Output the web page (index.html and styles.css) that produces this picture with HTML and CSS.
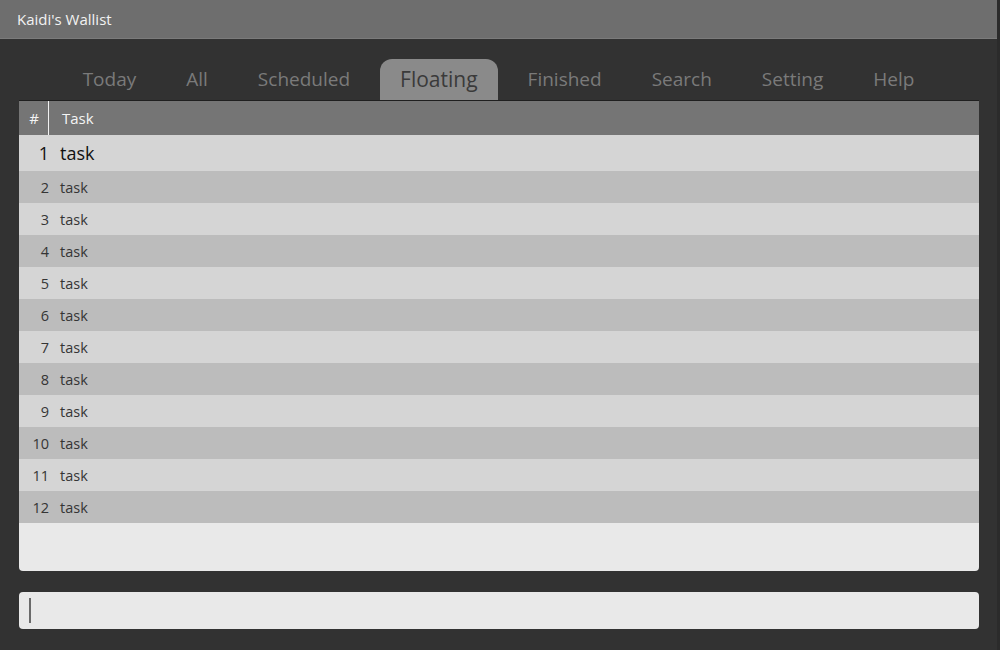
FILE: index.html
```html
<!DOCTYPE html>
<html>
<head>
<meta charset="utf-8">
<link rel="stylesheet" href="styles.css">
</head>
<body>
<div class="screen">
  <div class="window">
    <div class="titlebar">Kaidi's Wallist</div>
    <div class="tabs">
      <div class="tab">Today</div>
      <div class="tab">All</div>
      <div class="tab">Scheduled</div>
      <div class="tab active">Floating</div>
      <div class="tab">Finished</div>
      <div class="tab">Search</div>
      <div class="tab">Setting</div>
      <div class="tab">Help</div>
    </div>
    <div class="panel">
      <div class="thead">
        <div class="hnum">#</div>
        <div class="htask">Task</div>
      </div>
      <div class="row first"><div class="num">1</div><div class="task">task</div></div>
      <div class="row even"><div class="num">2</div><div class="task">task</div></div>
      <div class="row"><div class="num">3</div><div class="task">task</div></div>
      <div class="row even"><div class="num">4</div><div class="task">task</div></div>
      <div class="row"><div class="num">5</div><div class="task">task</div></div>
      <div class="row even"><div class="num">6</div><div class="task">task</div></div>
      <div class="row"><div class="num">7</div><div class="task">task</div></div>
      <div class="row even"><div class="num">8</div><div class="task">task</div></div>
      <div class="row"><div class="num">9</div><div class="task">task</div></div>
      <div class="row even"><div class="num">10</div><div class="task">task</div></div>
      <div class="row"><div class="num">11</div><div class="task">task</div></div>
      <div class="row even"><div class="num">12</div><div class="task">task</div></div>
    </div>
    <div class="input"><span class="caret"></span></div>
  </div>
  <div class="edge"></div>
</div>
</body>
</html>
```
FILE: styles.css
```css
html, body {
  margin: 0;
  padding: 0;
  background: #323232;
  font-family: "Open Sans", "Noto Sans", sans-serif;
}
.screen {
  display: flex;
  width: 1000px;
  height: 650px;
  overflow: hidden;
}
.window {
  width: 997px;
  display: flex;
  flex-direction: column;
}
.edge {
  width: 3px;
  background: #2b2b2b;
}
.titlebar {
  height: 38px;
  background: #6e6e6e;
  border-bottom: 1px solid #7b7b7b;
  color: #f2f2f2;
  font-size: 15px;
  line-height: 38px;
  padding-left: 17px;
}
.tabs {
  display: flex;
  justify-content: center;
  align-items: flex-end;
  gap: 10px;
  margin-top: 20px;
  height: 41px;
}
.tab {
  padding: 0 20px;
  font-size: 19px;
  line-height: 41px;
  height: 41px;
  color: #7a7a7a;
  border-radius: 12px 12px 0 0;
}
.tab.active {
  background: #8a8a8a;
  color: #3a3a3a;
  font-size: 21px;
}
.panel {
  margin-left: 19px;
  width: 960px;
  height: 471px;
  background: #e9e9e9;
  border-radius: 0 0 4px 4px;
  border-top: 1px solid #1f1f1f;
  box-sizing: border-box;
  overflow: hidden;
}
.thead {
  display: flex;
  height: 34px;
  background: #757575;
  color: #f4f4f4;
  font-size: 15px;
  line-height: 34px;
}
.hnum {
  width: 30px;
  padding-left: 1px;
  text-align: center;
  border-right: 1px solid #f0f0f0;
  box-sizing: border-box;
}
.htask {
  padding-left: 13px;
}
.row {
  display: flex;
  height: 32px;
  padding-top: 1px;
  box-sizing: border-box;
  line-height: 31px;
  background: #d5d5d5;
  color: #353535;
  font-size: 14.5px;
}
.row.even {
  background: #bcbcbc;
}
.row.first {
  height: 36px;
  line-height: 35px;
  font-size: 18px;
  color: #111;
}
.num {
  width: 30px;
  text-align: right;
}
.task {
  padding-left: 11px;
}
.input {
  margin-top: 21px;
  margin-left: 19px;
  width: 960px;
  height: 37px;
  background: #e9e9e9;
  border-radius: 4px;
  display: flex;
  align-items: center;
  padding-left: 10px;
  box-sizing: border-box;
}
.caret {
  width: 2px;
  height: 25px;
  background: #6a6a6a;
}
```
